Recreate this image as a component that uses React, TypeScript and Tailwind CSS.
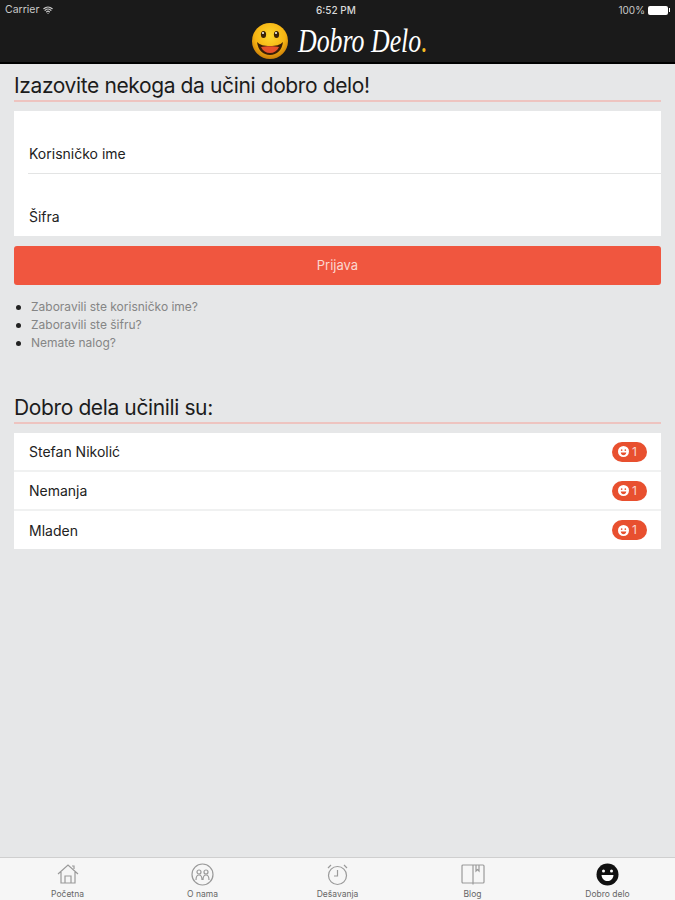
import type { ReactNode } from "react";
import { Wifi } from "lucide-react";

function SectionTitle({ children }: { children: string }) {
  return (
    <div className="border-b-2 border-[#eec4c0]">
      <h2 className="text-[21px] leading-[28px] text-[#1c1c1c] tracking-[-0.38px]">{children}</h2>
    </div>
  );
}

function Smiley({ size }: { size: number }) {
  return (
    <svg width={size} height={size} viewBox="0 0 24 24">
      <circle cx="12" cy="12" r="12" fill="#fff" />
      <circle cx="8" cy="9" r="1.8" fill="#e8502f" />
      <circle cx="16" cy="9" r="1.8" fill="#e8502f" />
      <path d="M6 14h12c-.5 4-3 6-6 6s-5.500-2-6-6z" fill="#e8502f" />
    </svg>
  );
}

function Logo() {
  return (
    <svg width="38" height="38" viewBox="0 0 38 38">
      <defs>
        <radialGradient id="face" cx="50%" cy="35%" r="65%">
          <stop offset="0%" stopColor="#ffd92e" />
          <stop offset="65%" stopColor="#f6b312" />
          <stop offset="100%" stopColor="#c97c08" />
        </radialGradient>
      </defs>
      <circle cx="19" cy="19" r="18" fill="url(#face)" />
      <ellipse cx="12.500" cy="12.500" rx="2.600" ry="3.600" fill="#3a2408" />
      <ellipse cx="25.500" cy="12.500" rx="2.600" ry="3.600" fill="#3a2408" />
      <circle cx="12" cy="11" r="1" fill="#fff" />
      <circle cx="25" cy="11" r="1" fill="#fff" />
      <path d="M6 20c3 3 7 4 13 4s10-1 13-4c-1 8-6 13-13 13S7 28 6 20z" fill="#3a1d08" />
      <path d="M10 25c3-1 15-1 18 0-2 4-5 6-9 6s-7-2-9-6z" fill="#e8502a" />
    </svg>
  );
}

function Row({ name, last }: { name: string; last?: boolean }) {
  return (
    <div className={`flex items-center justify-between pl-[15px] pr-[14px] ${last ? "h-[38px]" : "h-[39px] border-b-2 border-[#f0f1f1]"}`}>
      <span className="text-[14px] text-[#222]">{name}</span>
      <span className="w-[35px] h-[20px] rounded-full bg-[#e8502f] flex items-center pl-[6px] gap-[3px] text-[12px] text-[#fbd9d0]">
        <Smiley size={11} />1
      </span>
    </div>
  );
}

function Tab({ label, children }: { label: string; children: ReactNode }) {
  return (
    <div className="flex-1 flex flex-col items-center pt-[4px] text-[#666]">
      <div className="h-[24px] flex items-center justify-center">{children}</div>
      <span className="text-[8.500px] leading-[10px] mt-[3px]">{label}</span>
    </div>
  );
}

const iconStroke = { fill: "none", stroke: "#9a9a9a", strokeWidth: 1.200 };

function Bullet({ children }: { children: string }) {
  return (
    <li className="flex items-center gap-[10px]">
      <span className="w-[5px] h-[5px] rounded-full bg-[#222]" />
      {children}
    </li>
  );
}

export default function App() {
  return (
    <div className="w-[675px] h-[900px] flex flex-col bg-[#e6e7e8] font-['Inter',sans-serif] overflow-hidden">
      <header className="h-[64px] shrink-0 bg-[#1a1a1a] border-b-2 border-black relative">
        <div className="h-[20px] flex items-center justify-between px-[5px] text-[10px] text-[#c9c9c9]">
          <div className="flex items-center gap-[4px] text-[10.500px]">
            Carrier <Wifi size={10} strokeWidth={3} />
          </div>
          <div className="text-[#d8d8d8] font-medium">6:52 PM</div>
          <div className="flex items-center gap-[3px]">
            100%
            <span className="w-[20px] h-[9px] bg-white rounded-[2px]" />
            <span className="w-[1px] h-[4px] bg-white -ml-[2px]" />
          </div>
        </div>
        <div className="absolute left-[251px] top-[22px] flex items-center gap-[9px]">
          <Logo />
          <span className="text-[34px] leading-[38px] text-white italic font-['Liberation_Serif',serif] whitespace-nowrap origin-left scale-x-[0.76]">
            Dobro Delo<span className="text-[#f4bd24]">.</span>
          </span>
        </div>
      </header>

      <main className="flex-1 px-[14px] pt-[8px]">
        <SectionTitle>Izazovite nekoga da učini dobro delo!</SectionTitle>

        <div className="mt-[9px] bg-white h-[125px] flex flex-col pl-[14px] text-[14px] text-[#222]">
          <div className="h-[63px] flex items-end pb-[9px] pl-px border-b border-[#e3e4e4]">Korisničko ime</div>
          <div className="flex-1 flex items-end pb-[9px] pl-px">Šifra</div>
        </div>

        <button className="mt-[10px] w-full h-[39px] rounded-[3px] bg-[#f0563f] text-[13px] text-[#fbd7cf]">Prijava</button>

        <ul className="mt-[13px] pl-[2px] flex flex-col text-[12px] leading-[18px] text-[#858585]">
          <Bullet>Zaboravili ste korisničko ime?</Bullet>
          <Bullet>Zaboravili ste šifru?</Bullet>
          <Bullet>Nemate nalog?</Bullet>
        </ul>

        <div className="mt-[42px]">
          <SectionTitle>Dobro dela učinili su:</SectionTitle>
        </div>

        <div className="mt-[9px] bg-white">
          <Row name="Stefan Nikolić" />
          <Row name="Nemanja" />
          <Row name="Mladen" last />
        </div>
      </main>

      <nav className="h-[43px] shrink-0 bg-[#f6f6f6] border-t border-[#cfcfcf] flex">
        <Tab label="Početna">
          <svg width="22" height="22" viewBox="0 0 22 22" {...iconStroke}>
            <path d="M1 11 11 2l10 9M4 9v11h14V9M8 20v-7h6v7M15 3h2v3" />
          </svg>
        </Tab>
        <Tab label="O nama">
          <svg width="23" height="23" viewBox="0 0 23 23" {...iconStroke}>
            <circle cx="11.500" cy="11.500" r="10.500" />
            <circle cx="8" cy="9" r="2" />
            <circle cx="15" cy="9" r="2" />
            <path d="M5 17c0-3 1-5 3-5s3 2 3 5M12 17c0-3 1-5 3-5s3 2 3 5" />
          </svg>
        </Tab>
        <Tab label="Dešavanja">
          <svg width="23" height="23" viewBox="0 0 23 23" {...iconStroke}>
            <circle cx="11.500" cy="12.500" r="9" />
            <path d="M11.500 7v6H8M2 5l3-3M21 5l-3-3" />
          </svg>
        </Tab>
        <Tab label="Blog">
          <svg width="24" height="21" viewBox="0 0 24 21" {...iconStroke}>
            <rect x="1" y="1" width="22" height="18" rx="1" />
            <path d="M12 1v19.500M15 1v6l1.500-1.500L18 7V1" />
          </svg>
        </Tab>
        <Tab label="Dobro delo">
          <svg width="23" height="23" viewBox="0 0 23 23">
            <circle cx="11.500" cy="11.500" r="11" fill="#111" />
            <circle cx="7.500" cy="8" r="1.500" fill="#fff" />
            <circle cx="15.500" cy="8" r="1.500" fill="#fff" />
            <path d="M5.500 12h12c-.5 4-3 6-6 6s-5.500-2-6-6z" fill="#fff" />
          </svg>
        </Tab>
      </nav>
    </div>
  );
}
